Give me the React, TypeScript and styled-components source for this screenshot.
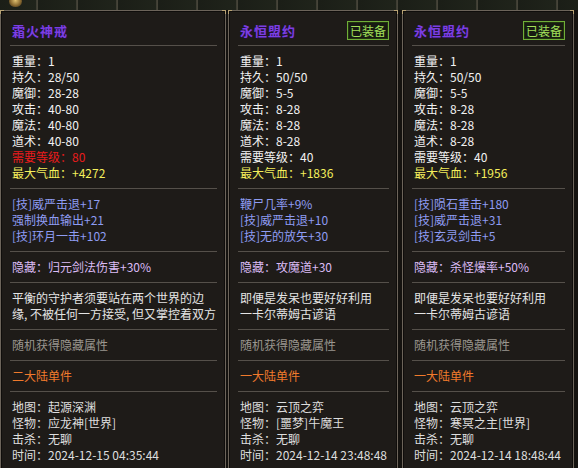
import styled, { createGlobalStyle } from 'styled-components';

const GlobalStyle = createGlobalStyle`
  html, body {
    margin: 0;
    padding: 0;
    background: #151311;
  }
  body {
    width: 578px;
    height: 468px;
    overflow: hidden;
    font-family: "Noto Sans CJK SC", "Noto Sans", sans-serif;
  }
`;

type Tone = 'white' | 'red' | 'yellow' | 'blue' | 'lavender' | 'quote' | 'gray' | 'orange' | 'info';

const tones: Record<Tone, string> = {
  white: '#f2f2f2',
  red: '#e81c1c',
  yellow: '#f4ef5c',
  blue: '#8e9cf2',
  lavender: '#dcbcf6',
  quote: '#e4e4e4',
  gray: '#9a968f',
  orange: '#f07a2c',
  info: '#dedede',
};

interface Stat {
  label: string;
  value: string;
  tone?: Tone;
}

interface Item {
  title: string;
  equipped: boolean;
  width: number;
  offset: number;
  stats: Stat[];
  skills: string[];
  hidden: string;
  quote: string[];
  continent: string;
  footer: Stat[];
}

const baseStats = (dura: string, mdef: string, atk: string, level: string, levelTone: Tone, hp: string): Stat[] => [
  { label: '重量', value: '1' },
  { label: '持久', value: dura },
  { label: '魔御', value: mdef },
  { label: '攻击', value: atk },
  { label: '魔法', value: atk },
  { label: '道术', value: atk },
  { label: '需要等级', value: level, tone: levelTone },
  { label: '最大气血', value: hp, tone: 'yellow' },
];

const oath = ['即便是发呆也要好好利用', '一卡尔蒂姆古谚语'];

const items: Item[] = [
  {
    title: '霜火神戒',
    equipped: false,
    width: 226,
    offset: 0,
    stats: baseStats('28/50', '28-28', '40-80', '80', 'red', '+4272'),
    skills: ['[技]威严击退+17', '强制换血输出+21', '[技]环月一击+102'],
    hidden: '归元剑法伤害+30%',
    quote: ['平衡的守护者须要站在两个世界的边', '缘, 不被任何一方接受, 但又掌控着双方'],
    continent: '二大陆单件',
    footer: [
      { label: '地图', value: '起源深渊' },
      { label: '怪物', value: '应龙神[世界]' },
      { label: '击杀', value: '无聊' },
      { label: '时间', value: '2024-12-15 04:35:44' },
    ],
  },
  {
    title: '永恒盟约',
    equipped: true,
    width: 170,
    offset: 2,
    stats: baseStats('50/50', '5-5', '8-28', '40', 'white', '+1836'),
    skills: ['鞭尸几率+9%', '[技]威严击退+10', '[技]无的放矢+30'],
    hidden: '攻魔道+30',
    quote: oath,
    continent: '一大陆单件',
    footer: [
      { label: '地图', value: '云顶之弈' },
      { label: '怪物', value: '[噩梦]牛魔王' },
      { label: '击杀', value: '无聊' },
      { label: '时间', value: '2024-12-14 23:48:48' },
    ],
  },
  {
    title: '永恒盟约',
    equipped: true,
    width: 172,
    offset: 4,
    stats: baseStats('50/50', '5-5', '8-28', '40', 'white', '+1956'),
    skills: ['[技]陨石重击+180', '[技]威严击退+31', '[技]玄灵剑击+5'],
    hidden: '杀怪爆率+50%',
    quote: oath,
    continent: '一大陆单件',
    footer: [
      { label: '地图', value: '云顶之弈' },
      { label: '怪物', value: '寒冥之主[世界]' },
      { label: '击杀', value: '无聊' },
      { label: '时间', value: '2024-12-14 18:48:44' },
    ],
  },
];

export default function App() {
  return (
    <>
      <GlobalStyle />
      <Screen>
        <SlotBar>
          <Orb />
        </SlotBar>
        <Row>
          {items.map((item, i) => (
            <Panel key={i} $width={item.width} $offset={item.offset}>
              <Header>
                <Title>{item.title}</Title>
                {item.equipped && <Badge>已装备</Badge>}
              </Header>
              <Section>
                {item.stats.map((s) => (
                  <Line key={s.label} $tone={s.tone ?? 'white'}>
                    {s.label}：{s.value}
                  </Line>
                ))}
              </Section>
              <Section>
                {item.skills.map((s) => (
                  <Line key={s} $tone="blue">
                    {s}
                  </Line>
                ))}
              </Section>
              <Section>
                <Line $tone="lavender">隐藏：{item.hidden}</Line>
              </Section>
              <Section>
                {item.quote.map((q) => (
                  <Line key={q} $tone="quote">
                    {q}
                  </Line>
                ))}
              </Section>
              <Section>
                <Line $tone="gray">随机获得隐藏属性</Line>
              </Section>
              <Section>
                <Line $tone="orange">{item.continent}</Line>
              </Section>
              <Section>
                {item.footer.map((f) => (
                  <Line key={f.label} $tone="info">
                    {f.label}：{f.value}
                  </Line>
                ))}
              </Section>
            </Panel>
          ))}
        </Row>
      </Screen>
    </>
  );
}

const Screen = styled.div`
  display: flex;
  flex-direction: column;
  width: 578px;
  height: 468px;
  overflow: hidden;
  background: #14120f;
`;

const SlotBar = styled.div`
  position: relative;
  height: 10px;
  flex: none;
  background: repeating-linear-gradient(
    90deg,
    #1b1e17 0px,
    #20241b 36px,
    #3b3a30 36px,
    #4a483c 38px,
    #1b1e17 38px,
    #1b1e17 40px
  );
`;

const Orb = styled.span`
  position: absolute;
  left: 9px;
  top: -4px;
  width: 13px;
  height: 11px;
  border-radius: 50%;
  background: radial-gradient(circle at 50% 40%, #e0c070 0%, #8a6a30 55%, #2a2418 100%);
`;

const Row = styled.div`
  display: flex;
  align-items: flex-start;
`;

const Panel = styled.div<{ $width: number; $offset: number }>`
  position: relative;
  box-sizing: border-box;
  width: ${(p) => p.$width}px;
  margin-left: ${(p) => p.$offset}px;
  height: 470px;
  flex: none;
  padding: 0 8px 0 9px;
  background: #1e1b18;
  border: 1px solid #6c645a;
  box-shadow: inset 0 0 0 1px #0f0d0b;

  &::before,
  &::after {
    content: '';
    position: absolute;
    top: -1px;
    width: 3px;
    height: 3px;
    border-top: 1px solid #b8a274;
  }
  &::before {
    left: -1px;
    border-left: 1px solid #b8a274;
  }
  &::after {
    right: -1px;
    border-right: 1px solid #b8a274;
  }
`;

const Header = styled.div`
  display: flex;
  align-items: center;
  justify-content: space-between;
  height: 19px;
  padding: 10px 0 5px 2px;
`;

const Title = styled.div`
  font-size: 13px;
  font-weight: bold;
  letter-spacing: 1px;
  line-height: 19px;
  color: #7b3ee4;
  text-shadow: 1px 1px 0 #241238;
`;

const Badge = styled.div`
  box-sizing: border-box;
  height: 19px;
  padding: 0 2px;
  font-size: 12px;
  line-height: 17px;
  color: #a2e05a;
  border: 1px solid #6fae38;
  box-shadow: inset 0 0 0 1px #22330f;
  background: #171a12;
`;

const Section = styled.div`
  padding: 7px 0 7px 2px;
  border-top: 1px solid #55504a;
`;

const Line = styled.div<{ $tone: Tone }>`
  font-size: 12px;
  line-height: 16px;
  height: 16px;
  white-space: nowrap;
  overflow: hidden;
  color: ${(p) => tones[p.$tone]};
`;
